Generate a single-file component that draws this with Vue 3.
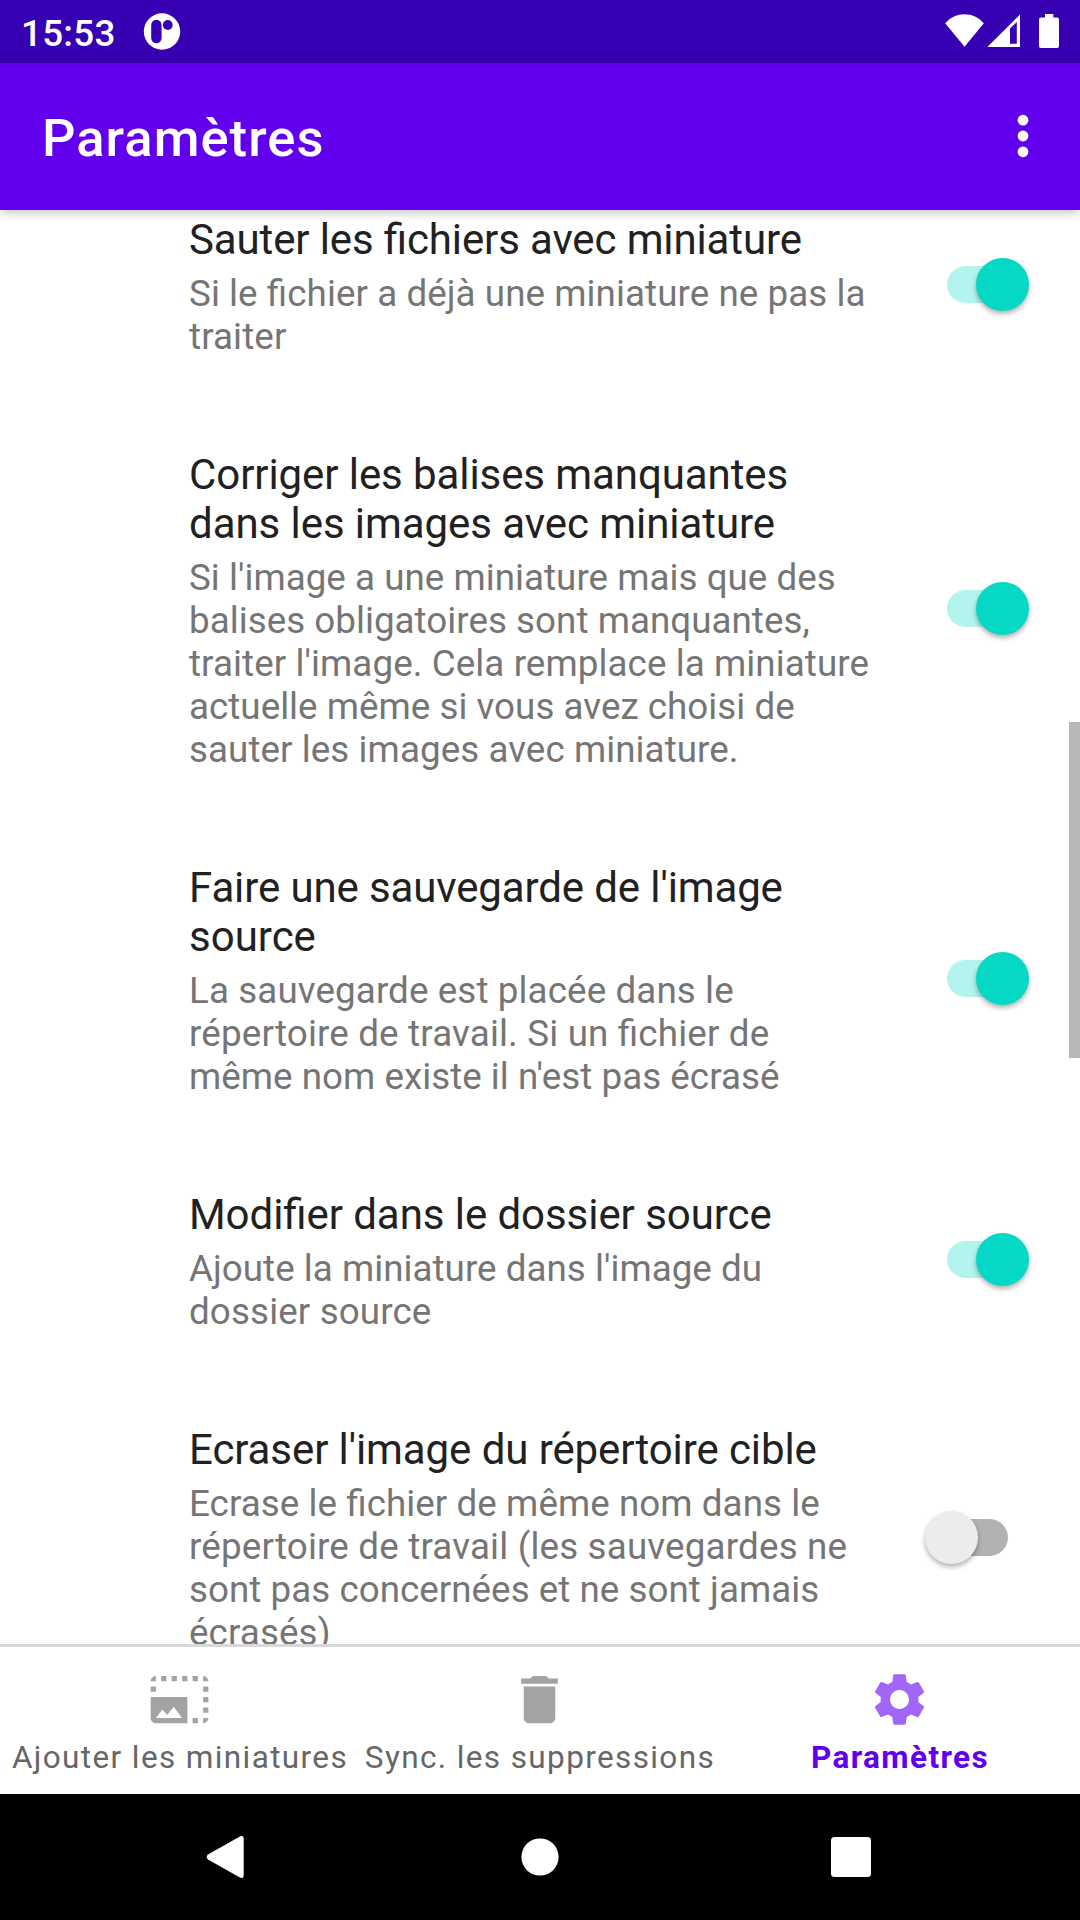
<script setup>
// Each line is [text, tracking in px].
const settings = [
  {
    title: [['Sauter les fichiers avec miniature', -0.126]],
    summary: [
      ['Si le fichier a déjà une miniature ne pas la', 0.07],
      ['traiter', 0.12],
    ],
    on: true,
  },
  {
    title: [
      ['Corriger les balises manquantes', -0.08],
      ['dans les images avec miniature', -0.06],
    ],
    summary: [
      ["Si l'image a une miniature mais que des", 0.035],
      ['balises obligatoires sont manquantes,', 0.035],
      ["traiter l'image. Cela remplace la miniature", 0.09],
      ['actuelle même si vous avez choisi de', 0.03],
      ['sauter les images avec miniature.', 0.07],
    ],
    on: true,
  },
  {
    title: [
      ["Faire une sauvegarde de l'image", -0.12],
      ['source', 0],
    ],
    summary: [
      ['La sauvegarde est placée dans le', 0.11],
      ['répertoire de travail. Si un fichier de', 0.17],
      ["même nom existe il n'est pas écrasé", 0.03],
    ],
    on: true,
  },
  {
    title: [['Modifier dans le dossier source', -0.06]],
    summary: [
      ["Ajoute la miniature dans l'image du", 0.035],
      ['dossier source', 0.13],
    ],
    on: true,
  },
  {
    title: [["Ecraser l'image du répertoire cible", -0.088]],
    summary: [
      ['Ecrase le fichier de même nom dans le', 0.065],
      ['répertoire de travail (les sauvegardes ne', 0.18],
      ['sont pas concernées et ne sont jamais', 0.035],
      ['écrasés)', 0.12],
    ],
    on: false,
  },
]

const tabs = [
  {
    label: 'Ajouter les miniatures',
    icon: 'M21 15h2v2h-2v-2zm0-4h2v2h-2v-2zm2 8h-2v2c1 0 2-1 2-2zM13 3h2v2h-2V3zm8 4h2v2h-2V7zm0-4v2h2c0-1-1-2-2-2zM1 7h2v2H1V7zm16-4h2v2h-2V3zm0 16h2v2h-2v-2zM3 3C2 3 1 4 1 5h2V3zm6 0h2v2H9V3zM5 3h2v2H5V3zm-4 8v8c0 1.1.9 2 2 2h12V11H1zm2 8l2.5-3.21 1.79 2.15 2.5-3.22L13 19H3z',
  },
  {
    label: 'Sync. les suppressions',
    icon: 'M6 19c0 1.1.9 2 2 2h8c1.1 0 2-.9 2-2V7H6v12zM19 4h-3.5l-1-1h-5l-1 1H5v2h14V4z',
  },
  {
    label: 'Paramètres',
    active: true,
    icon: 'M19.14,12.94c0.04-0.3,0.06-0.61,0.06-0.94c0-0.32-0.02-0.64-0.07-0.94l2.03-1.58c0.18-0.14,0.23-0.41,0.12-0.61l-1.92-3.32c-0.12-0.22-0.37-0.29-0.59-0.22l-2.39,0.96c-0.5-0.38-1.03-0.7-1.62-0.94L14.4,2.81c-0.04-0.24-0.24-0.41-0.48-0.41h-3.84c-0.24,0-0.43,0.17-0.47,0.41L9.25,5.35C8.66,5.59,8.12,5.92,7.63,6.29L5.24,5.33c-0.22-0.08-0.47,0-0.59,0.22L2.74,8.87C2.62,9.08,2.66,9.34,2.86,9.48l2.03,1.58C4.84,11.36,4.8,11.69,4.8,12s0.02,0.64,0.07,0.94l-2.03,1.58c-0.18,0.14-0.23,0.41-0.12,0.61l1.92,3.32c0.12,0.22,0.37,0.29,0.59,0.22l2.39-0.96c0.5,0.38,1.03,0.7,1.62,0.94l0.36,2.54c0.05,0.24,0.24,0.41,0.48,0.41h3.84c0.24,0,0.44-0.17,0.47-0.41l0.36-2.54c0.59-0.24,1.13-0.56,1.62-0.94l2.39,0.96c0.22,0.08,0.47,0,0.59-0.22l1.92-3.32c0.12-0.22,0.07-0.47-0.12-0.61L19.14,12.94z M12,15.6c-1.98,0-3.6-1.62-3.6-3.6s1.62-3.6,3.6-3.6s3.6,1.62,3.6,3.6S13.98,15.6,12,15.6z',
  },
]
</script>

<template>
  <div class="screen">
    <header class="status">
      <span class="clock">15:53</span>
      <svg class="notif" width="38" height="63" viewBox="143 0 38 63">
        <circle cx="162" cy="31.5" r="18.2" fill="#fff" />
        <rect x="151.2" y="19.7" width="10.4" height="23.6" rx="5.2" fill="#3700b3" />
        <circle cx="167.8" cy="25" r="4.9" fill="#3700b3" />
      </svg>
      <svg class="signals" width="136" height="63" viewBox="944 0 136 63" fill="#fff">
        <path d="M964.5 46.8L945.2 23.2C950.5 17.2 957.2 14.2 964.5 14.2S978.5 17.2 983.8 23.2z" />
        <path fill-rule="evenodd" d="M987.3 46.9L1020 14.4V46.900zM1010 43.700H1016.800V22L1010 28.600z" />
        <path d="M1045 14h8.300v3.400h3.700q2 0 2 2v26.500q0 2-2 2h-16q-2 0-2-2V19.400q0-2 2-2h4z" />
      </svg>
    </header>

    <div class="appbar">
      <h1>Paramètres</h1>
      <svg class="more" width="12" height="44" viewBox="0 0 12 44" fill="#fff">
        <circle cx="6" cy="6.2" r="5.4" />
        <circle cx="6" cy="22" r="5.4" />
        <circle cx="6" cy="37.8" r="5.4" />
      </svg>
    </div>

    <main class="list">
      <section v-for="(s, i) in settings" :key="i" class="item">
        <div class="texts">
          <div class="title">
            <div v-for="[text, tracking] in s.title" :key="text" :style="{ letterSpacing: tracking + 'px' }">{{ text }}</div>
          </div>
          <div class="summary">
            <div v-for="[text, tracking] in s.summary" :key="text" :style="{ letterSpacing: tracking + 'px' }">{{ text }}</div>
          </div>
        </div>
        <div class="switch" :class="{ on: s.on }"><i class="thumb"></i></div>
      </section>
      <div class="scrollbar"></div>
    </main>

    <nav class="tabs">
      <div v-for="t in tabs" :key="t.label" class="tab" :class="{ active: t.active }">
        <svg width="63" height="63" viewBox="0 0 24 24"><path :d="t.icon" /></svg>
        <span>{{ t.label }}</span>
      </div>
    </nav>

    <footer class="sysnav">
      <svg width="1080" height="126" viewBox="0 0 1080 126" fill="#fff">
        <path d="M208 60.5L239 43Q243.700 40.500 243.700 45V81Q243.700 85.500 239 83L208 65.500Q205.300 63 208 60.500z" />
        <circle cx="540" cy="63" r="18.6" />
        <rect x="831" y="43" width="40" height="40" rx="3.5" />
      </svg>
    </footer>
  </div>
</template>

<style>
body {
  margin: 0;
}
</style>

<style scoped>
.screen {
  width: 1080px;
  height: 1920px;
  display: flex;
  flex-direction: column;
  overflow: hidden;
  background: #fff;
  font-family: Roboto, 'Liberation Sans', sans-serif;
}
svg {
  display: block;
  flex: none;
}
.status {
  height: 63px;
  flex: none;
  display: flex;
  background: #3700b3;
  color: #fff;
}
.clock {
  width: 122px;
  padding-left: 21px;
  font-size: 36.75px;
  font-weight: 500;
  line-height: 67px;
  letter-spacing: 0.3px;
}
.signals {
  margin-left: auto;
}
.appbar {
  position: relative;
  z-index: 1;
  height: 147px;
  flex: none;
  box-sizing: border-box;
  padding: 0 51.5px 1px 42px;
  display: flex;
  align-items: center;
  justify-content: space-between;
  background: #6200ee;
  color: #fff;
  box-shadow: 0 2px 10px rgba(0, 0, 0, 0.26);
}
h1 {
  margin: 3px 0 0;
  font-size: 52.5px;
  font-weight: 500;
  line-height: 62px;
  letter-spacing: 1.05px;
}
.list {
  position: relative;
  flex: 1;
  min-height: 0;
  overflow: hidden;
}
.item {
  display: flex;
  align-items: center;
  justify-content: space-between;
  padding: 0 72.5px 0 189px;
}
.item:first-child {
  margin-top: -43px;
}
.texts {
  padding: 48px 0 44px;
  white-space: nowrap;
  font-feature-settings: 'liga' 1;
}
.title {
  font-size: 42px;
  line-height: 49px;
  color: #212121;
}
.summary {
  margin-top: 8px;
  font-size: 36.75px;
  line-height: 43px;
  color: #757575;
}
.switch {
  width: 61px;
  height: 37px;
  border-radius: 19px;
  background: #b2b2b2;
}
.thumb {
  display: block;
  width: 53px;
  height: 53px;
  margin: -8px 0 0 -21.5px;
  border-radius: 50%;
  background: #ececec;
  box-shadow: 0 3px 5px rgba(0, 0, 0, 0.3);
}
.switch.on {
  background: #b4f4ee;
}
.switch.on .thumb {
  margin-left: 29px;
  background: #05d8c4;
}
.scrollbar {
  position: absolute;
  right: 0;
  top: 512px;
  width: 11px;
  height: 336px;
  background: #b7b7b7;
}
.tabs {
  height: 147px;
  flex: none;
  display: flex;
  border-top: 3px solid #d9d9d9;
}
.tab {
  flex: 1 1 0;
  min-width: 0;
  display: flex;
  flex-direction: column;
  align-items: center;
  padding-top: 21px;
  color: #666;
}
.tab svg {
  margin-right: 1px;
  fill: #a3a3a3;
}
.tab span {
  margin-top: 8px;
  font-size: 31.5px;
  line-height: 37px;
  letter-spacing: 1.38px;
  white-space: nowrap;
}
.tab.active {
  color: #6200ee;
}
.tab.active span {
  font-weight: 700;
}
.tab.active svg {
  fill: #a166f5;
}
.sysnav {
  height: 126px;
  flex: none;
  background: #000;
}
</style>
